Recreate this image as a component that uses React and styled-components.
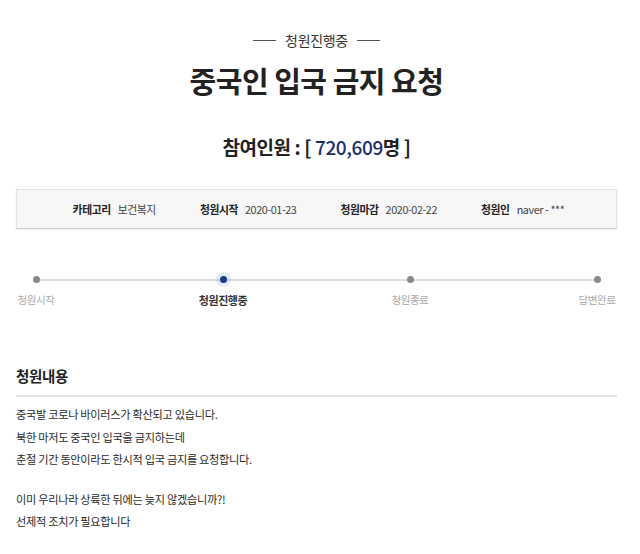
import styled, { createGlobalStyle } from "styled-components"

const GlobalStyle = createGlobalStyle`
  body {
    margin: 0;
    background: #fff;
    font-family: "Noto Sans CJK KR", "Noto Sans", sans-serif;
    color: #222;
  }
`

const INFO = [
  { label: "카테고리", value: "보건복지" },
  { label: "청원시작", value: "2020-01-23" },
  { label: "청원마감", value: "2020-02-22" },
  { label: "청원인", value: "naver - ***" },
]

const STEPS = [
  { name: "청원시작" },
  { name: "청원진행중", active: true },
  { name: "청원종료" },
  { name: "답변완료" },
]

const BODY = [
  "중국발 코로나 바이러스가 확산되고 있습니다.",
  "북한 마저도 중국인 입국을 금지하는데",
  "춘절 기간 동안이라도 한시적 입국 금지를 요청합니다.",
  "",
  "이미 우리나라 상륙한 뒤에는 늦지 않겠습니까?!",
  "선제적 조치가 필요합니다",
]

const App = () => {
  return (
    <Page>
      <GlobalStyle />
      <Status>청원진행중</Status>
      <Title>중국인 입국 금지 요청</Title>
      <Count>
        참여인원 : [ <Num>720,609</Num>명 ]
      </Count>

      <InfoBox>
        {INFO.map((_item, index) => (
          <InfoItem key={"info" + index}>
            <InfoLabel>{_item.label}</InfoLabel>
            <InfoValue>{_item.value}</InfoValue>
          </InfoItem>
        ))}
      </InfoBox>

      <Progress>
        {STEPS.map((_step, index) => (
          <Step key={"step" + index}>
            <Dot $active={_step.active} />
            <StepName $active={_step.active}>{_step.name}</StepName>
          </Step>
        ))}
      </Progress>

      <SectionTitle>청원내용</SectionTitle>
      <Content>
        {BODY.map((_line, index) =>
          _line ? <Line key={"line" + index}>{_line}</Line> : <Blank key={"line" + index} />
        )}
      </Content>
    </Page>
  )
}

export default App

const Page = styled.div`
  width: 601px;
  margin-left: 16px;
  padding-top: 31px;
`

const Status = styled.div`
  display: flex;
  align-items: center;
  justify-content: center;
  gap: 9px;
  font-size: 14px;
  line-height: 18px;
  color: #333;
  letter-spacing: -0.3px;
  &::before,
  &::after {
    content: "";
    width: 23px;
    height: 1px;
    background: #555;
  }
`

const Title = styled.h1`
  margin: 13px 0 0;
  text-align: center;
  font-size: 29px;
  line-height: 36px;
  font-weight: 700;
  color: #222;
  letter-spacing: -0.5px;
`

const Count = styled.div`
  margin-top: 37px;
  text-align: center;
  font-size: 19px;
  line-height: 24px;
  font-weight: 700;
  color: #222;
  letter-spacing: -0.4px;
`

const Num = styled.span`
  color: #1c2d6b;
  font-weight: 500;
`

const InfoBox = styled.div`
  margin-top: 30px;
  height: 40px;
  box-sizing: border-box;
  display: flex;
  align-items: center;
  justify-content: center;
  gap: 44px;
  background: #f7f7f7;
  border: 1px solid #e3e3e3;
  border-bottom-color: #cfcfcf;
  box-shadow: 0 1px 2px rgba(0, 0, 0, 0.08);
  padding-left: 4px;
`

const InfoItem = styled.div`
  display: flex;
  align-items: baseline;
  gap: 7px;
  font-size: 10.8px;
  letter-spacing: -0.4px;
`

const InfoLabel = styled.span`
  font-weight: 700;
  color: #222;
`

const InfoValue = styled.span`
  color: #444;
`

const Progress = styled.div`
  position: relative;
  margin-top: 46px;
  display: flex;
  justify-content: space-between;
  &::before {
    content: "";
    position: absolute;
    left: 20px;
    right: 20px;
    top: 4px;
    height: 2px;
    background: #ddd;
  }
`

const Step = styled.div`
  position: relative;
  width: 40px;
  display: flex;
  flex-direction: column;
  align-items: center;
`

const Dot = styled.span`
  width: 7px;
  height: 7px;
  margin-top: 1px;
  border-radius: 50%;
  background: ${(p) => (p.$active ? "#1d3b84" : "#8a8a8a")};
  box-shadow: ${(p) => (p.$active ? "0 0 0 4px rgba(120, 160, 230, 0.2)" : "none")};
`

const StepName = styled.span`
  margin-top: 9px;
  white-space: nowrap;
  font-size: ${(p) => (p.$active ? "11px" : "10.5px")};
  line-height: 16px;
  letter-spacing: -0.4px;
  font-weight: ${(p) => (p.$active ? 700 : 400)};
  color: ${(p) => (p.$active ? "#333" : "#aaa")};
`

const SectionTitle = styled.h2`
  margin: 57px 0 0;
  padding-bottom: 8px;
  border-bottom: 2px solid #e3e3e3;
  font-size: 14.5px;
  line-height: 22px;
  font-weight: 700;
  color: #222;
  letter-spacing: -0.3px;
`

const Content = styled.div`
  padding-top: 6px;
  font-size: 11.2px;
  color: #2a2a2a;
  letter-spacing: -0.3px;
`

const Line = styled.p`
  margin: 0;
  line-height: 22.5px;
`

const Blank = styled.div`
  height: 17px;
`
